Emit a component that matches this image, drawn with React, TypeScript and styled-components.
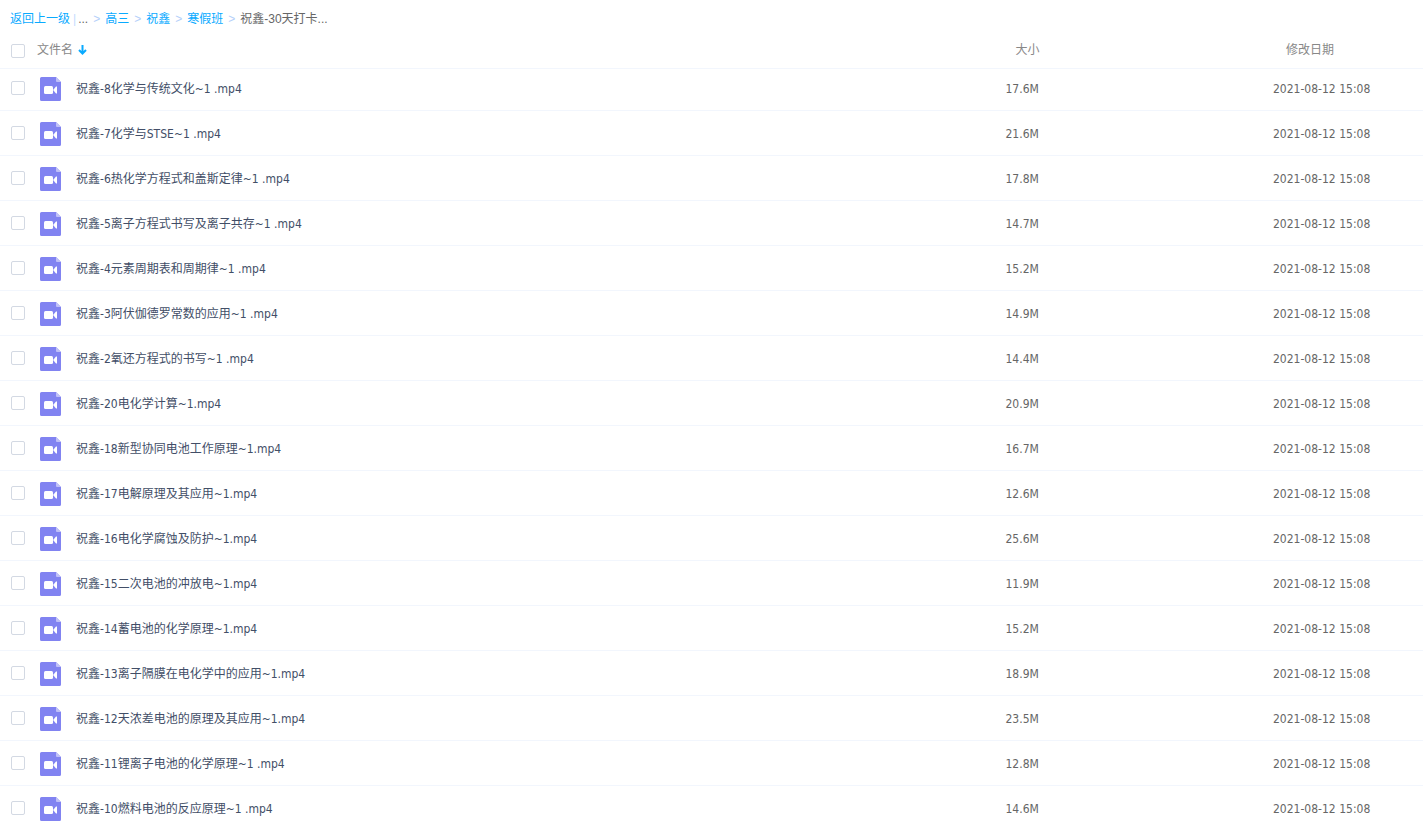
import React from 'react';
import styled, { createGlobalStyle } from 'styled-components';

const GlobalStyle = createGlobalStyle`
  * { box-sizing: border-box; }
  body {
    margin: 0;
    background: #fff;
    font: 12px/24px "DejaVu Sans Condensed", "Noto Sans CJK SC", sans-serif;
    color: #666;
  }
`;

const Page = styled.main`
  height: 100vh;
  overflow: hidden;
`;

const Breadcrumb = styled.nav`
  display: flex;
  align-items: center;
  height: 36px;
  padding: 2px 0 0 10px;
  white-space: pre;
  font-family: "Liberation Sans", "Noto Sans CJK SC", sans-serif;
`;

const CrumbLink = styled.a`
  color: #09aaff;
  text-decoration: none;
`;

const Divider = styled.span`
  padding: 0 2px 0 3px;
  color: #c4dbfe;
`;

const Separator = styled.span`
  padding: 0 5px;
  color: #b4cffa;
`;

const FileTable = styled.table`
  width: 100%;
  table-layout: fixed;
  border-collapse: separate;
  border-spacing: 0;
`;

const HeadRow = styled.tr`
  height: 33px;
`;

const HeadCell = styled.th<{ $width?: string; $inset?: number }>`
  width: ${({ $width }) => $width ?? 'auto'};
  padding: 0 0 6px ${({ $inset }) => $inset ?? 0}px;
  border-bottom: 1px solid #f2f6fd;
  color: #888;
  font-weight: 400;
  text-align: left;
  vertical-align: bottom;
`;

const Row = styled.tr`
  height: 45px;

  &:first-child {
    height: 42px;
  }
`;

const Cell = styled.td`
  padding: 0 0 9px;
  border-bottom: 1px solid #f2f6fd;
  vertical-align: bottom;
`;

const NameLine = styled.div`
  display: flex;
  align-items: center;
  height: 24px;
  padding-left: 11px;
`;

const Checkbox = styled.input<{ $header?: boolean }>`
  appearance: none;
  flex: none;
  width: 14px;
  height: 14px;
  margin: ${({ $header }) => ($header ? '2px 0 0' : '0 0 2px')};
  border: 1px solid #d3d9e3;
  border-radius: 2px;
  background: #fff;
`;

const VideoIcon = styled.svg`
  flex: none;
  margin: 0 15px;
`;

const FileName = styled.label`
  color: #424e67;
  white-space: pre;
`;

const SortButton = styled.button`
  display: flex;
  align-items: center;
  gap: 5px;
  margin: 0 0 0 12px;
  padding: 0;
  border: 0;
  background: none;
  color: inherit;
  font: inherit;
`;

const files: [string, string][] = [
  ['祝鑫-8化学与传统文化~1 .mp4', '17.6M'],
  ['祝鑫-7化学与STSE~1 .mp4', '21.6M'],
  ['祝鑫-6热化学方程式和盖斯定律~1 .mp4', '17.8M'],
  ['祝鑫-5离子方程式书写及离子共存~1 .mp4', '14.7M'],
  ['祝鑫-4元素周期表和周期律~1 .mp4', '15.2M'],
  ['祝鑫-3阿伏伽德罗常数的应用~1 .mp4', '14.9M'],
  ['祝鑫-2氧还方程式的书写~1 .mp4', '14.4M'],
  ['祝鑫-20电化学计算~1.mp4', '20.9M'],
  ['祝鑫-18新型协同电池工作原理~1.mp4', '16.7M'],
  ['祝鑫-17电解原理及其应用~1.mp4', '12.6M'],
  ['祝鑫-16电化学腐蚀及防护~1.mp4', '25.6M'],
  ['祝鑫-15二次电池的冲放电~1.mp4', '11.9M'],
  ['祝鑫-14蓄电池的化学原理~1.mp4', '15.2M'],
  ['祝鑫-13离子隔膜在电化学中的应用~1.mp4', '18.9M'],
  ['祝鑫-12天浓差电池的原理及其应用~1.mp4', '23.5M'],
  ['祝鑫-11锂离子电池的化学原理~1 .mp4', '12.8M'],
  ['祝鑫-10燃料电池的反应原理~1 .mp4', '14.6M'],
];

const parents = ['高三', '祝鑫', '寒假班'];

export default function App() {
  return (
    <Page>
      <GlobalStyle />
      <Breadcrumb>
        <CrumbLink href="#">返回上一级</CrumbLink>
        <Divider>|</Divider>
        <span>...</span>
        {parents.map((name) => (
          <React.Fragment key={name}>
            <Separator>&gt;</Separator>
            <CrumbLink href="#">{name}</CrumbLink>
          </React.Fragment>
        ))}
        <Separator>&gt;</Separator>
        <span>祝鑫-30天打卡...</span>
      </Breadcrumb>
      <FileTable>
        <thead>
          <HeadRow>
            <HeadCell>
              <NameLine>
                <Checkbox $header type="checkbox" aria-label="全选" />
                <SortButton type="button">
                  文件名
                  <svg width="9" height="10" viewBox="0 0 9 10" fill="none" stroke="#09aaff" strokeWidth="2">
                    <path d="M4.5 0v8M1 5l3.500 3.500L8 5" />
                  </svg>
                </SortButton>
              </NameLine>
            </HeadCell>
            <HeadCell $width="18.8%" $inset={10}>大小</HeadCell>
            <HeadCell $width="150px" $inset={13}>修改日期</HeadCell>
          </HeadRow>
        </thead>
        <tbody>
          {files.map(([name, size], i) => (
            <Row key={name}>
              <Cell>
                <NameLine>
                  <Checkbox type="checkbox" id={`file-${i}`} />
                  <VideoIcon width="21" height="24" viewBox="0 0 21 24">
                    <path d="M1.500 0H16l5 5v17.500a1.500 1.500 0 0 1-1.500 1.500h-18A1.500 1.500 0 0 1 0 22.500v-21A1.500 1.500 0 0 1 1.500 0z" fill="#8183f1" />
                    <path d="M16 0l5 5h-4a1 1 0 0 1-1-1z" fill="#c0c1f8" />
                    <rect x="4" y="9" width="9" height="8" rx="1.500" fill="#fff" />
                    <path d="M13.500 12.500L16 9.500h1v7h-1l-2.500-3z" fill="#fff" />
                  </VideoIcon>
                  <FileName htmlFor={`file-${i}`}>{name}</FileName>
                </NameLine>
              </Cell>
              <Cell>{size}</Cell>
              <Cell>2021-08-12 15:08</Cell>
            </Row>
          ))}
        </tbody>
      </FileTable>
    </Page>
  );
}
